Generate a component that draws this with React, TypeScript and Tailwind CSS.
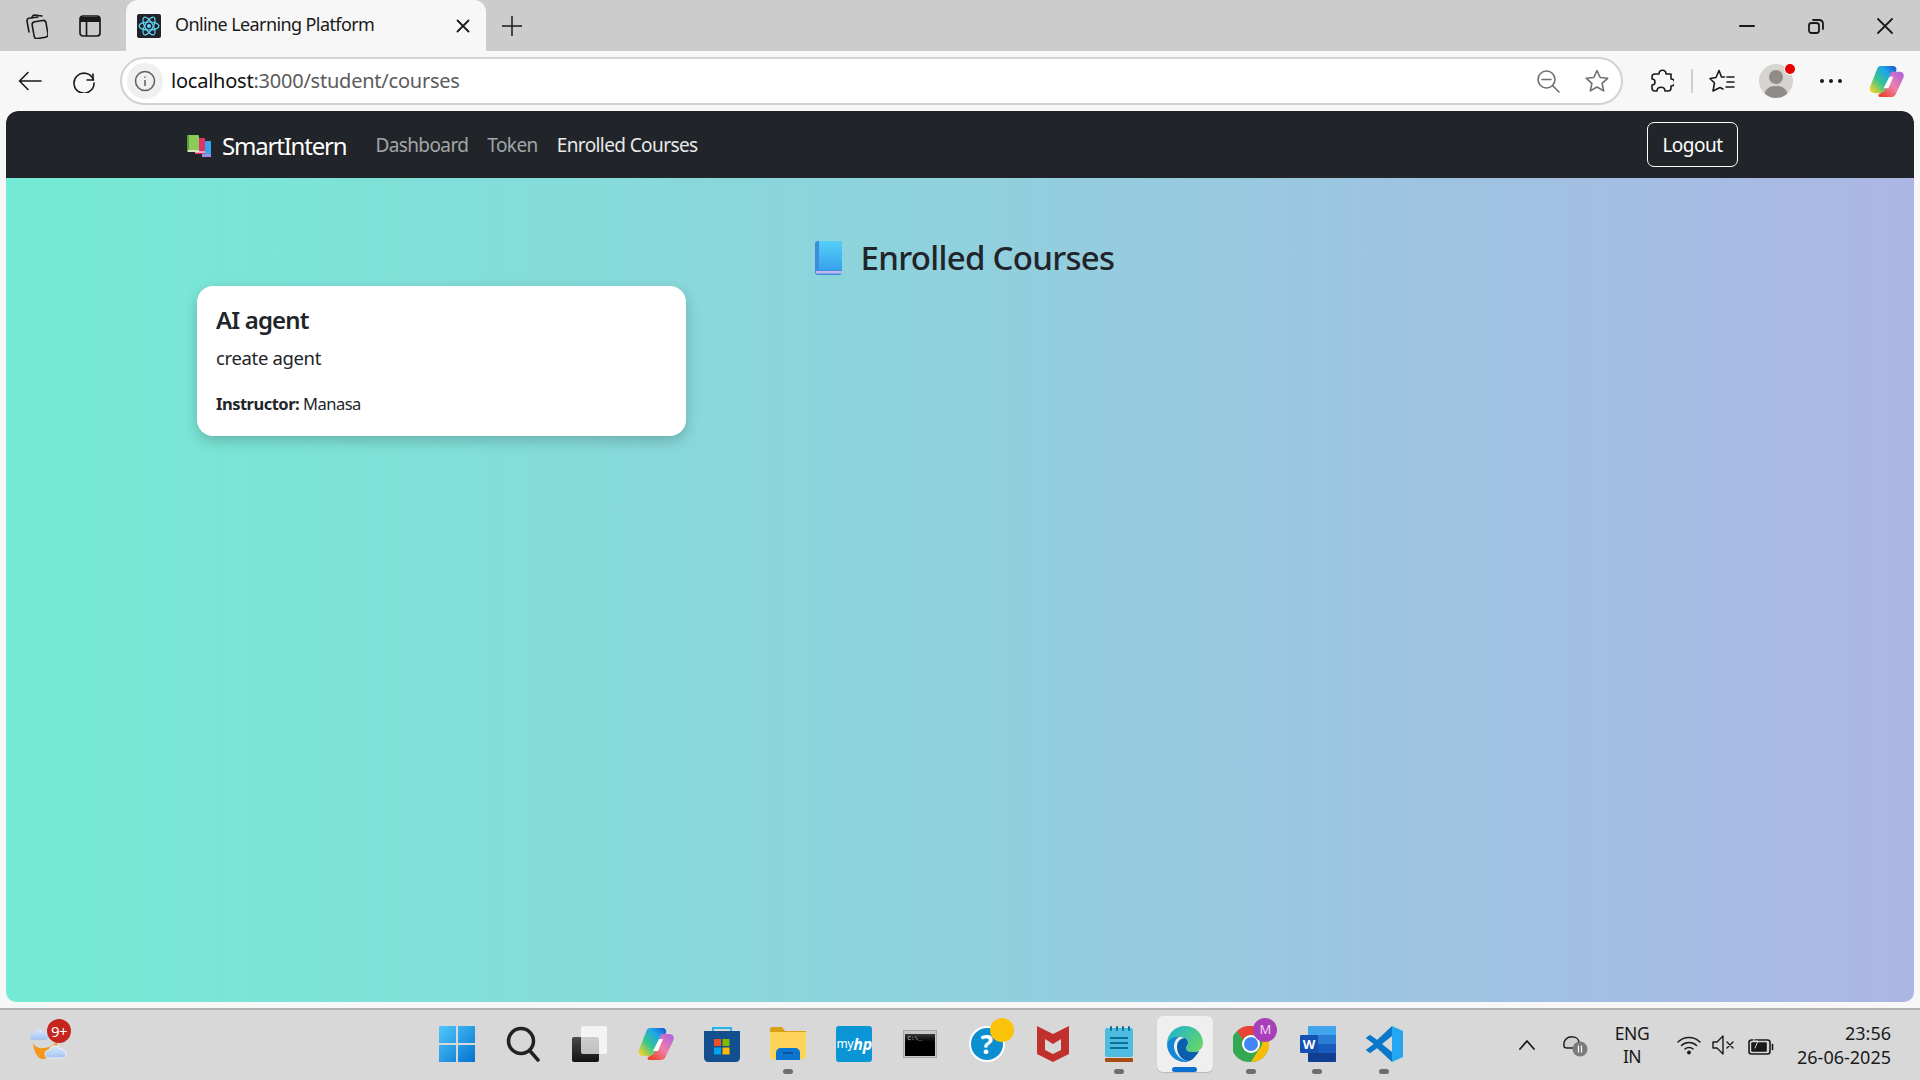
/**
 * Enrolled courses page, shown inside the Edge window on a Windows 11 desktop
 */

import React from 'react';

const font = 'font-["Noto_Sans","Open_Sans",sans-serif]';

function ReactFavicon() {
  return (
    <svg width="24" height="24" viewBox="0 0 24 24" fill="none">
      <rect width="24" height="24" rx="2" fill="#20232a" />
      <g stroke="#61dafb" strokeWidth="1.2">
        <ellipse cx="12" cy="12" rx="10" ry="4" />
        <ellipse cx="12" cy="12" rx="10" ry="4" transform="rotate(60 12 12)" />
        <ellipse cx="12" cy="12" rx="10" ry="4" transform="rotate(120 12 12)" />
      </g>
      <circle cx="12" cy="12" r="2" fill="#61dafb" />
    </svg>
  );
}

function Stroke({ w, h, children, sw = 1.6, color = '#1a1a1a' }: { w: number; h: number; children: React.ReactNode; sw?: number; color?: string }) {
  return (
    <svg width={w} height={h} viewBox={`0 0 ${w} ${h}`} fill="none" stroke={color} strokeWidth={sw} strokeLinecap="round" strokeLinejoin="round">
      {children}
    </svg>
  );
}

function CopilotIcon({ size }: { size: number }) {
  return (
    <svg width={size} height={size} viewBox="0 0 36 36">
      <defs>
        <linearGradient id={`cpA${size}`} x1="0" y1="1" x2="1" y2="0">
          <stop offset="0.05" stopColor="#f9d423" />
          <stop offset="0.4" stopColor="#35c48f" />
          <stop offset="0.7" stopColor="#1ea7e8" />
          <stop offset="1" stopColor="#1a4fd0" />
        </linearGradient>
        <linearGradient id={`cpB${size}`} x1="0" y1="1" x2="1" y2="0">
          <stop offset="0.1" stopColor="#f0452f" />
          <stop offset="0.5" stopColor="#f07fa8" />
          <stop offset="1" stopColor="#a85fe8" />
        </linearGradient>
      </defs>
      <path d="M12 2H24C27 2 29 4 28 7L21 27C20 30 17 30 14 30H6C2 30 0 27 1 24L8 6C9 3 10 2 12 2z" fill={`url(#cpA${size})`} />
      <path d="M23 8H31C35 8 37 11 35 15L28 30C27 33 25 34 22 34H12C10 34 9 33 10 31L16 28z" fill={`url(#cpB${size})`} />
      <path d="M21 13H25L20 25H15z" fill="#ffffff" />
    </svg>
  );
}

function TabStrip() {
  return (
    <div className="flex h-[51px] shrink-0 items-center bg-[#cccccc]">
      <div className="flex h-full w-[126px] items-center pl-[24px]">
        <Stroke w={24} h={26}>
          <rect x="9" y="8" width="14" height="17" rx="3" transform="rotate(-10 16 16)" />
          <path d="M5 19 3 8c0-2 1-3 3-3l8-1" />
          <path d="M8 5c0-2 1-3 3-3l7 1" />
        </Stroke>
        <div className="ml-[31px]">
          <svg width="22" height="22" viewBox="0 0 22 22" fill="none" stroke="#1a1a1a" strokeWidth="1.7">
            <rect x="1" y="1" width="20" height="20" rx="3" />
            <path d="M1 4.5h20" strokeWidth="5" />
            <path d="M7.5 7v14" />
          </svg>
        </div>
      </div>
      <div className="flex h-full w-[360px] items-center rounded-t-[12px] bg-[#f7f7f7] pl-[11px]">
        <ReactFavicon />
        <span className={`mb-[3px] ml-[14px] text-[18px] tracking-[-0.6px] text-[#1a1a1a] ${font}`}>Online Learning Platform</span>
        <div className="ml-auto mr-[16px]">
          <Stroke w={14} h={14} sw={1.8}>
            <path d="M1.5 1.5l11 11M12.500 1.500l-11 11" />
          </Stroke>
        </div>
      </div>
      <div className="ml-[16px]">
        <Stroke w={20} h={20} sw={1.5}>
          <path d="M10 0v20M0 10h20" />
        </Stroke>
      </div>
      <div className="ml-auto flex items-center">
        <Stroke w={16} h={4} sw={2}>
          <path d="M1 2h14" />
        </Stroke>
        <div className="ml-[53px]">
          <Stroke w={16} h={16} sw={1.8}>
            <rect x="1" y="5" width="10" height="10" rx="2.500" />
            <path d="M5 2h6c2.500 0 4 1.500 4 4v5" />
          </Stroke>
        </div>
        <div className="ml-[53px] mr-[27px]">
          <Stroke w={16} h={16} sw={1.8}>
            <path d="M1 1l14 14M15 1 1 15" />
          </Stroke>
        </div>
      </div>
    </div>
  );
}

function Toolbar() {
  return (
    <div className="flex h-[60px] shrink-0 items-center bg-[#f7f7f7] pl-[18px]">
      <Stroke w={24} h={20}>
        <path d="M23 10H1.500M10 1.500 1.500 10l8.500 8.500" />
      </Stroke>
      <div className="ml-[30px]">
        <Stroke w={24} h={24}>
          <path d="M21 5v6h-6" />
          <path d="M21.500 11A10 10 0 1 0 22 14" />
        </Stroke>
      </div>
      <div className="ml-[24px] flex h-[48px] w-[1503px] items-center rounded-full border-2 border-[#d2d2d2] bg-white pl-[5px] pr-[12px]">
        <div className="flex h-[36px] w-[36px] items-center justify-center rounded-full bg-[#f0f0f0]">
          <svg width="22" height="22" viewBox="0 0 22 22" fill="none" stroke="#5f5f5f" strokeWidth="1.5">
            <circle cx="11" cy="11" r="9.500" />
            <path d="M11 10v6M11 6.500v1.200" />
          </svg>
        </div>
        <span className={`ml-[8px] text-[20px] tracking-[-0.23px] ${font}`}>
          <span className="text-[#111111]">localhost</span>
          <span className="text-[#5b5b5b]">:3000/student/courses</span>
        </span>
        <div className="ml-auto flex items-center gap-[25px]">
          <Stroke w={23} h={23} color="#6f6f6f">
            <circle cx="9.500" cy="9.500" r="8.500" />
            <path d="M15.500 15.500l6.500 6.500M5 9.500h9" />
          </Stroke>
          <Stroke w={24} h={24} color="#6f6f6f">
            <path d="M12 1.500l3.200 7 7.500.8-5.600 5.100 1.600 7.500L12 18l-6.700 3.900 1.600-7.500L1.300 9.300l7.500-.8z" />
          </Stroke>
        </div>
      </div>
      <div className="ml-[27px]">
        <Stroke w={24} h={24}>
          <path d="M9 5c0-5 7-5 7 0h5v5c5 0 5 7 0 7v2c0 2-1 3-3 3h-3c0-5-8-5-8 0H5c-2 0-3-1-3-3v-3c4 0 4-6 0-6V8c0-2 1-3 3-3z" />
        </Stroke>
      </div>
      <div className="ml-[17px] h-[24px] w-[2px] bg-[#cfcfcf]" />
      <div className="ml-[16px]">
        <Stroke w={26} h={24}>
          <path d="M10 1.500l2.500 6.500h3M4 22l1.500-8L1 9.500l6-1 3-7M4 22l7-3.500 3 1.500M18 8h7M18 13h7M17 18h8" />
        </Stroke>
      </div>
      <div className="relative ml-[24px] h-[34px] w-[34px] overflow-hidden rounded-full bg-[#d6d4d1]">
        <div className="absolute left-[10px] top-[6px] h-[14px] w-[14px] rounded-full bg-[#908c88]" />
        <div className="absolute left-[5px] top-[22px] h-[20px] w-[24px] rounded-full bg-[#908c88]" />
      </div>
      <div className="relative">
        <div className="absolute -left-[8px] -top-[17px] h-[10px] w-[10px] rounded-full bg-[#e60000] ring-1 ring-[#f7f7f7]" />
      </div>
      <div className="ml-[27px] flex gap-[5px]">
        <div className="h-[4px] w-[4px] rounded-full bg-[#1a1a1a]" />
        <div className="h-[4px] w-[4px] rounded-full bg-[#1a1a1a]" />
        <div className="h-[4px] w-[4px] rounded-full bg-[#1a1a1a]" />
      </div>
      <div className="ml-[27px]">
        <CopilotIcon size={35} />
      </div>
    </div>
  );
}

function BooksLogo() {
  return (
    <svg width="25" height="22" viewBox="0 0 25 22">
      <rect x="15" y="6" width="9" height="16" fill="#35a7e6" />
      <rect x="15" y="19" width="9" height="3" fill="#9b8fe8" />
      <rect x="8" y="3" width="10" height="16" fill="#e0336b" />
      <rect x="8" y="16" width="10" height="2" fill="#f2a4bd" />
      <rect x="0" y="0" width="12" height="17" rx="1" fill="#8dcb58" />
      <rect x="0" y="0" width="2" height="17" fill="#5d9c3a" />
      <rect x="1" y="15" width="11" height="2" fill="#d7e8c4" />
    </svg>
  );
}

function BookEmoji() {
  return (
    <svg width="27" height="34" viewBox="0 0 27 34">
      <defs>
        <linearGradient id="bookBlue" x1="0" y1="0" x2="0" y2="1">
          <stop offset="0" stopColor="#56cff8" />
          <stop offset="1" stopColor="#36a2ee" />
        </linearGradient>
      </defs>
      <rect width="27" height="34" rx="3" fill="#3a8fd8" />
      <path d="M4 0h20c2 0 3 1 3 3v26H4z" fill="url(#bookBlue)" />
      <rect x="1" y="30" width="26" height="2.500" fill="#c5b5f0" />
    </svg>
  );
}

function Navbar() {
  return (
    <nav className={`flex h-[67px] shrink-0 items-center rounded-t-[12px] bg-[#212529] pl-[181px] pt-[2px] ${font}`}>
      <BooksLogo />
      <span className="ml-[10px] text-[24px] tracking-[-1.2px] text-white">SmartIntern</span>
      <a className="ml-[29px] text-[19px] tracking-[-0.6px] text-[#a3a5a7]">Dashboard</a>
      <a className="ml-[19px] text-[19px] tracking-[-0.6px] text-[#a3a5a7]">Token</a>
      <a className="ml-[19px] text-[19px] tracking-[-0.6px] text-[#e9e9ea]">Enrolled Courses</a>
      <button className="-mt-[2px] ml-auto mr-[176px] h-[45px] w-[91px] rounded-[7px] border border-white pt-[2px] text-center text-[19px] tracking-[-0.5px] text-white">
        Logout
      </button>
    </nav>
  );
}

function CourseCard() {
  return (
    <div className={`h-[150px] w-[489px] rounded-[16px] bg-white px-[19px] pt-[18px] text-[#212529] shadow-[0_5px_14px_rgba(0,0,0,0.2)] ${font}`}>
      <h5 className="text-[24px] font-semibold leading-[32px] tracking-[-0.85px]">AI agent</h5>
      <p className="mt-[9px] text-[18.5px] leading-[26px] tracking-[-0.35px]">create agent</p>
      <p className="mt-[22px] text-[16.500px] leading-[22px] tracking-[-0.5px]">
        <strong className="font-bold">Instructor:</strong> Manasa
      </p>
    </div>
  );
}

function PageContent() {
  return (
    <div className="mx-[6px] flex flex-1 flex-col overflow-hidden rounded-[12px] rounded-b-[10px]">
      <Navbar />
      <main className="flex-1 bg-linear-to-r/srgb from-[#74ebd5] to-[#acb6e5] pl-[191px] pt-[54px]">
        <div className={`mb-[2px] flex h-[52px] items-center justify-center pr-[182px] ${font}`}>
          <BookEmoji />
          <h2 className="ml-[19px] text-[33px] font-medium tracking-[-0.7px] text-[#212529]">Enrolled Courses</h2>
        </div>
        <CourseCard />
      </main>
    </div>
  );
}

function WeatherIcon() {
  return (
    <svg width="44" height="44" viewBox="0 0 44 44">
      <defs>
        <linearGradient id="cloudFill" x1="0" y1="0" x2="0" y2="1">
          <stop offset="0" stopColor="#dbe8fa" />
          <stop offset="1" stopColor="#a4c4f2" />
        </linearGradient>
      </defs>
      <path d="M6 20C9 26 16 26 22 24C26 22 28 21 30 19C31 27 25 36 16 36C11 36 7 30 6 20z" fill="#f2971c" />
      <path d="M3 14C3 11 5 10 7 10C8 6 14 4 16 9C19 9 21 11 21 14C21 16 20 17 18 17H6C4 17 3 16 3 14z" fill="url(#cloudFill)" />
      <path d="M18 31C18 28 20 27 22 27C23 22 31 21 33 26C36 26 39 28 39 31C39 34 37 35 35 35H21C19 35 18 33 18 31z" fill="url(#cloudFill)" stroke="#ffffff" strokeWidth="0.7" />
    </svg>
  );
}

function TaskbarItem({ children, dot, active }: { children: React.ReactNode; dot?: boolean; active?: boolean }) {
  return (
    <div className="relative -mt-[2px] flex h-[56px] w-[66.2px] shrink-0 items-center justify-center">
      {active && <div className="absolute left-[5px] h-[56px] w-[56px] rounded-[6px] bg-[#efefef] shadow-[0_1px_1px_rgba(0,0,0,0.15)]" />}
      <div className="relative flex items-center justify-center">{children}</div>
      {dot && <div className="absolute bottom-[-2px] left-[28px] h-[5px] w-[10px] rounded-full bg-[#6e6e6e]" />}
      {active && <div className="absolute bottom-0 left-[20px] h-[5px] w-[25px] rounded-full bg-[#0a6fd0]" />}
    </div>
  );
}

function StartIcon() {
  return (
    <svg width="36" height="36" viewBox="0 0 36 36">
      <defs>
        <linearGradient id="winGrad" x1="0" y1="0" x2="1" y2="1">
          <stop offset="0" stopColor="#4fc8fb" />
          <stop offset="1" stopColor="#0472cf" />
        </linearGradient>
      </defs>
      <path d="M0 1c0-1 0-1 1-1h16v17H0zM19 0h16c1 0 1 0 1 1v16H19zM0 19h17v17H1c-1 0-1 0-1-1zM19 19h17v16c0 1 0 1-1 1H19z" fill="url(#winGrad)" />
    </svg>
  );
}

function TaskViewIcon() {
  return (
    <svg width="36" height="36" viewBox="0 0 36 36">
      <defs>
        <linearGradient id="tvGrad" x1="0" y1="0" x2="0" y2="1">
          <stop offset="0" stopColor="#4a4a4a" />
          <stop offset="1" stopColor="#111111" />
        </linearGradient>
      </defs>
      <rect x="1" y="11" width="27" height="25" rx="2" fill="url(#tvGrad)" />
      <rect x="10" y="0" width="26" height="28" rx="2" fill="#ffffff" opacity="0.72" />
    </svg>
  );
}

function StoreIcon() {
  return (
    <svg width="36" height="36" viewBox="0 0 36 36">
      <path d="M9 8V2h18v6" fill="none" stroke="#25b4e8" strokeWidth="2" />
      <path d="M0 5h36v27c0 2-2 4-4 4H4c-2 0-4-2-4-4z" fill="#134f8f" />
      <rect x="10" y="13" width="7" height="7" fill="#f25022" />
      <rect x="18.500" y="13" width="7" height="7" fill="#7fba00" />
      <rect x="10" y="21.500" width="7" height="7" fill="#00a4ef" />
      <rect x="18.500" y="21.500" width="7" height="7" fill="#ffb900" />
    </svg>
  );
}

function FilesIcon() {
  return (
    <svg width="36" height="34" viewBox="0 0 36 34">
      <path d="M0 2c0-1 1-2 2-2h10l3 4h21v4H0z" fill="#d9a015" />
      <path d="M0 5h36v27H0z" fill="#fdd35a" />
      <path d="M6 33V26c0-3 2-5 5-5h14c3 0 5 2 5 5v7z" fill="#0a74cf" />
      <path d="M13 26h10" stroke="#064b8c" strokeWidth="1.5" />
    </svg>
  );
}

function MyHpIcon() {
  return (
    <div className={`flex h-[36px] w-[36px] items-center justify-center rounded-[3px] bg-[#0a96d6] text-[12px] tracking-[-0.3px] text-white ${font}`}>
      my<span className="text-[16px] font-bold italic">hp</span>
    </div>
  );
}

function CmdIcon() {
  return (
    <div className="h-[28px] w-[34px] border border-[#a8a8a8] bg-[#c8c8c8] px-[1px] pt-[3px] pb-[1px]">
      <div className="h-full w-full bg-linear-to-b from-[#3a3a3a] via-black to-black pl-[2px] font-['Liberation_Mono',monospace] text-[6px] leading-[9px] text-[#cfcfcf]">
        C:\_
      </div>
    </div>
  );
}

function HelpIcon() {
  return (
    <div className="relative h-[36px] w-[36px]">
      <div className={`flex h-[36px] w-[36px] items-center justify-center rounded-full border-[2px] border-white bg-[#0a8fd0] text-[26px] font-bold leading-none text-white ${font}`}>?</div>
      <div className="absolute -right-[9px] -top-[8px] h-[24px] w-[24px] rounded-full bg-[#fcc30b]" />
    </div>
  );
}

function McAfeeIcon() {
  return (
    <svg width="32" height="36" viewBox="0 0 32 36">
      <path d="M0 0l16 8 16-8v28l-16 8-16-8z" fill="#c1302c" />
      <path d="M8 13l8 5 8-5v11l-8 4-8-4z" fill="#d8d8d8" />
    </svg>
  );
}

function NotepadIcon() {
  return (
    <svg width="28" height="36" viewBox="0 0 28 36">
      <rect y="2" width="28" height="29" rx="2" fill="#4ebcdf" />
      <rect x="0" y="32" width="28" height="4" rx="1" fill="#a84d12" />
      <g fill="#0d6f97">
        <rect x="5" y="0" width="2" height="5" rx="1" />
        <rect x="11" y="0" width="2" height="5" rx="1" />
        <rect x="17" y="0" width="2" height="5" rx="1" />
        <rect x="23" y="0" width="2" height="5" rx="1" />
        <rect x="5" y="11" width="18" height="2" />
        <rect x="5" y="16" width="18" height="2" />
        <rect x="5" y="21" width="18" height="2" />
      </g>
    </svg>
  );
}

function EdgeIcon() {
  return (
    <svg width="36" height="36" viewBox="0 0 36 36">
      <defs>
        <linearGradient id="edgeTop" x1="0" y1="0" x2="1" y2="0.7">
          <stop offset="0" stopColor="#1bb0d8" />
          <stop offset="1" stopColor="#63d66a" />
        </linearGradient>
      </defs>
      <path d="M18 0C29 0 36 8 36 17C36 23 31 26 26 26C22 26 19 25 19 22C19 20 21 19 21 17C21 13 16 11 12 11C6 11 2 14 0 18C0 8 8 0 18 0z" fill="url(#edgeTop)" />
      <path d="M0 18C2 13 7 10 12 11C7 14 6 20 8 25C10 31 16 35 22 35C20 36 19 36 18 36C8 36 0 28 0 18z" fill="#1487d6" />
      <path d="M10 21C10 15 14 12 18 12C20 13 21 15 21 17C21 19 19 20 19 22C19 25 22 26 26 26C28 26 30 25.500 32 25C29 31 24 35 22 35C15 35 10 28 10 21z" fill="#0a5fae" />
    </svg>
  );
}

function ChromeIcon() {
  return (
    <div className="relative h-[36px] w-[36px]">
      <svg width="36" height="36" viewBox="0 0 36 36">
        <circle cx="18" cy="18" r="18" fill="#34a853" />
        <path d="M18 0a18 18 0 0 1 15.600 9H18a9 9 0 0 0-8 5L4 5A18 18 0 0 1 18 0z" fill="#ea4335" />
        <path d="M33.600 9A18 18 0 0 1 18 36l8-13a9 9 0 0 0 0-14z" fill="#fbbc05" />
        <path d="M4 5l6 9a9 9 0 0 0 8 13l-4 9A18 18 0 0 1 4 5z" fill="#34a853" />
        <circle cx="18" cy="18" r="9" fill="#fff" />
        <circle cx="18" cy="18" r="7" fill="#4285f4" />
      </svg>
      <div className={`absolute -right-[8px] -top-[8px] flex h-[24px] w-[24px] items-center justify-center rounded-full bg-[#a63fb8] text-[13px] text-[#f0d8f5] ${font}`}>M</div>
    </div>
  );
}

function WordIcon() {
  return (
    <svg width="36" height="36" viewBox="0 0 36 36">
      <path d="M8 1c0-1 1-1 1-1h26c1 0 1 1 1 1v8H8z" fill="#41a5ee" />
      <rect x="8" y="9" width="28" height="9" fill="#2b7cd3" />
      <rect x="8" y="18" width="28" height="9" fill="#185abd" />
      <path d="M8 27h28v8c0 1-1 1-1 1H9s-1 0-1-1z" fill="#103f91" />
      <rect x="0" y="9" width="18" height="18" rx="1" fill="#1551b3" />
      <text x="9" y="23" textAnchor="middle" fontSize="13" fontWeight="700" fill="#fff" fontFamily="Noto Sans, sans-serif">W</text>
    </svg>
  );
}

function VsCodeIcon() {
  return (
    <svg width="38" height="36" viewBox="0 0 38 36">
      <path d="M27 0l11 5v26l-11 5z" fill="#22a7f0" />
      <path d="M27 0v10L12 22l-7 5-4-3 8-6-8-6 4-3 7 5z" fill="#0a78c9" />
      <path d="M27 36V26L12 14 5 9 1 12l8 6-8 6 4 3 7-5z" fill="#0a78c9" />
    </svg>
  );
}

function Tray() {
  return (
    <div className={`ml-auto flex h-full items-center pr-[29px] text-[#1a1a1a] ${font}`}>
      <Stroke w={16} h={10} sw={1.8}>
        <path d="M1 9l7-8 7 8" />
      </Stroke>
      <div className="ml-[27px]">
        <svg width="26" height="24" viewBox="0 0 26 24">
          <path d="M2 13C1 7 6 3 11 4c4 0 6 3 6 6 4 0 5 3 4 5H5c-2 0-3-1-3-2z" fill="#d0d0d0" stroke="#222222" strokeWidth="1.5" />
          <circle cx="18" cy="16" r="7.500" fill="#7b7b7b" />
          <path d="M16.500 12.500v7M19.500 12.500v7" stroke="#fff" strokeWidth="1.200" />
        </svg>
      </div>
      <div className="ml-[23px] w-[42px] text-center text-[17.5px] leading-[23px] tracking-[-0.5px]">
        <div>ENG</div>
        <div>IN</div>
      </div>
      <div className="ml-[24px]">
        <Stroke w={24} h={20} sw={1.5}>
          <path d="M1 7c6-6 16-6 22 0M4.500 10.500c4-4 11-4 15 0M8 14c2-2 6-2 8 0" />
          <circle cx="12" cy="17.500" r="1.200" fill="#1a1a1a" />
        </Stroke>
      </div>
      <div className="ml-[11px]">
        <Stroke w={23} h={20} sw={1.4}>
          <path d="M1 7v6h4l6 6V1L5 7zM15 7l6 6M21 7l-6 6" />
        </Stroke>
      </div>
      <div className="ml-[13px]">
        <Stroke w={26} h={24} sw={1.6}>
          <rect x="1" y="7" width="21" height="14" rx="2.500" />
          <path d="M24.500 11.500v5" />
          <path d="M4 10h14v8H4z" fill="#1a1a1a" />
          <path d="M9 1 5 8h5l-3 7" stroke="#d8d8d8" strokeWidth="1" />
        </Stroke>
      </div>
      <div className="ml-[23px] w-[94px] whitespace-nowrap text-right text-[18px] leading-[24.500px] tracking-[0px]">
        <div>23:56</div>
        <div>26-06-2025</div>
      </div>
    </div>
  );
}

function Taskbar() {
  return (
    <div className="flex h-[72px] shrink-0 items-center border-t-2 border-[#b0b0b0] bg-[#d8d8d8]">
      <div className="relative flex w-[424px] shrink-0 pl-[27px]">
        <WeatherIcon />
        <div className={`absolute left-[47px] -top-[4px] flex h-[24px] w-[24px] items-center justify-center rounded-full bg-[#c4261d] text-[15px] leading-none tracking-[-0.5px] text-white ${font}`}>9+</div>
      </div>
      <TaskbarItem><StartIcon /></TaskbarItem>
      <TaskbarItem>
        <Stroke w={34} h={36} sw={3.5} color="#222222">
          <circle cx="15" cy="15" r="12.500" />
          <path d="M24 25l8 9" />
        </Stroke>
      </TaskbarItem>
      <TaskbarItem><TaskViewIcon /></TaskbarItem>
      <TaskbarItem><CopilotIcon size={36} /></TaskbarItem>
      <TaskbarItem><StoreIcon /></TaskbarItem>
      <TaskbarItem dot><FilesIcon /></TaskbarItem>
      <TaskbarItem><MyHpIcon /></TaskbarItem>
      <TaskbarItem><CmdIcon /></TaskbarItem>
      <TaskbarItem><HelpIcon /></TaskbarItem>
      <TaskbarItem><McAfeeIcon /></TaskbarItem>
      <TaskbarItem dot><NotepadIcon /></TaskbarItem>
      <TaskbarItem active><EdgeIcon /></TaskbarItem>
      <TaskbarItem dot><ChromeIcon /></TaskbarItem>
      <TaskbarItem dot><WordIcon /></TaskbarItem>
      <TaskbarItem dot><VsCodeIcon /></TaskbarItem>
      <Tray />
    </div>
  );
}

export default function App() {
  return (
    <div className="flex h-screen w-screen flex-col overflow-hidden bg-[#f7f7f7]">
      <TabStrip />
      <Toolbar />
      <PageContent />
      <div className="h-[6px] shrink-0 bg-[#f7f7f7]" />
      <Taskbar />
    </div>
  );
}
